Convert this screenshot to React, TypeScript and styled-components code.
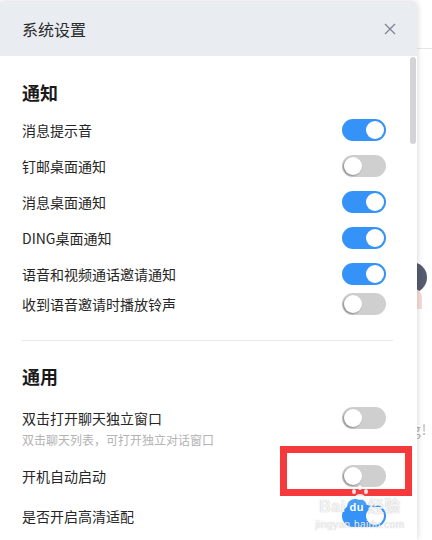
import styled, { createGlobalStyle } from "styled-components";

type Item = {
  label: string;
  on: boolean;
  h: number;
  sub?: string;
};

const notices: Item[] = [
  { label: "消息提示音", on: true, h: 36 },
  { label: "钉邮桌面通知", on: false, h: 36 },
  { label: "消息桌面通知", on: true, h: 36 },
  { label: "DING桌面通知", on: true, h: 36 },
  { label: "语音和视频通话邀请通知", on: true, h: 36 },
  { label: "收到语音邀请时播放铃声", on: false, h: 24 },
];

const general: Item[] = [
  { label: "双击打开聊天独立窗口", on: false, h: 0, sub: "双击聊天列表，可打开独立对话窗口" },
  { label: "开机自动启动", on: false, h: 40 },
  { label: "是否开启高清适配", on: true, h: 40 },
];

export default function App() {
  return (
    <Page>
      <GlobalStyle />
      <Backdrop>
        <BackHeader />
        <BackBody>
          <Avatar />
          <Shoulder />
          <BackText>ig!</BackText>
        </BackBody>
      </Backdrop>

      <Dialog>
        <Header>
          <Title>系统设置</Title>
          <CloseBtn aria-label="关闭">
            <svg width="12" height="12" viewBox="0 0 12 12">
              <path d="M1 1 11 11M11 1 1 11" stroke="#7d8593" strokeWidth="1.3" fill="none" />
            </svg>
          </CloseBtn>
        </Header>

        <Body>
          <SectionTitle>通知</SectionTitle>
          {notices.map((el, idx) => (
            <Row key={idx} $h={el.h}>
              <Label>{el.label}</Label>
              <Switch $on={el.on} />
            </Row>
          ))}

          <Divider />

          <SectionTitle $top={23}>通用</SectionTitle>
          {general.map((el, idx) =>
            el.sub ? (
              <SubRow key={idx}>
                <SubHead>
                  <Label>{el.label}</Label>
                  <Switch $on={el.on} />
                </SubHead>
                <Hint>{el.sub}</Hint>
              </SubRow>
            ) : (
              <Row key={idx} $h={el.h}>
                <Label>{el.label}</Label>
                <Switch $on={el.on} />
              </Row>
            )
          )}
        </Body>

        <ScrollThumb />
      </Dialog>

      <Highlight />

      <Watermark>
        <Paw>
          <i /><i /><i /><i />
        </Paw>
        <MarkLine>
          Bai<Du>du</Du>经验
        </MarkLine>
        <MarkUrl>jingyan.baidu.com</MarkUrl>
      </Watermark>
    </Page>
  );
}

const GlobalStyle = createGlobalStyle`
  html, body {
    margin: 0;
    padding: 0;
    background: #fff;
  }
  body {
    font-family: "Noto Sans CJK SC", "Noto Sans", sans-serif;
    -webkit-font-smoothing: antialiased;
  }
`;

const Page = styled.div`
  position: relative;
  width: 432px;
  height: 540px;
  overflow: hidden;
  background: #fff;
`;

const Backdrop = styled.div`
  display: flex;
  flex-direction: column;
  height: 100%;
`;

const BackHeader = styled.div`
  height: 48px;
  border-bottom: 1px solid #e6e6e6;
  flex-shrink: 0;
`;

const BackBody = styled.div`
  display: flex;
  flex-direction: column;
  padding: 213px 0 0 396px;
`;

const Avatar = styled.div`
  width: 31px;
  height: 31px;
  border-radius: 50%;
  background: #555c6f;
`;

const Shoulder = styled.div`
  width: 26px;
  height: 22px;
  margin-top: -6px;
  border-radius: 50% 50% 0 0;
  background: #f6dcd6;
`;

const BackText = styled.div`
  margin: 110px 0 0 12px;
  font-size: 14px;
  color: #b4b4b4;
  letter-spacing: 1px;
`;

const Dialog = styled.div`
  position: absolute;
  top: 2px;
  left: 0;
  width: 417px;
  height: 538px;
  background: #fff;
  border-radius: 0 4px 0 0;
  box-shadow: 0 0 6px rgba(0, 0, 0, 0.18);
  display: flex;
  flex-direction: column;
  overflow: hidden;
`;

const Header = styled.div`
  height: 54px;
  flex-shrink: 0;
  background: #e9ecf1;
  display: flex;
  align-items: center;
  justify-content: space-between;
  padding: 0 21px 0 22px;
`;

const Title = styled.div`
  font-size: 16px;
  color: #2b2b2b;
  line-height: 20px;
`;

const CloseBtn = styled.div`
  display: flex;
  width: 12px;
  height: 12px;
`;

const Body = styled.div`
  display: flex;
  flex-direction: column;
  padding: 24px 24px 0 22px;
`;

const SectionTitle = styled.div<{ $top?: number }>`
  font-size: 18px;
  font-weight: 700;
  line-height: 24px;
  color: #1a1a1a;
  margin: ${(p) => p.$top ?? 0}px 0 8px;
`;

const Row = styled.div<{ $h: number }>`
  height: ${(p) => p.$h}px;
  display: flex;
  align-items: center;
  justify-content: space-between;
  padding-right: 7px;
`;

const SubRow = styled.div`
  display: flex;
  flex-direction: column;
  padding: 11px 7px 7px 0;
`;

const SubHead = styled.div`
  height: 22px;
  display: flex;
  align-items: center;
  justify-content: space-between;
`;

const Label = styled.div`
  font-size: 14px;
  line-height: 20px;
  color: #262626;
`;

const Hint = styled.div`
  font-size: 12px;
  line-height: 18px;
  margin-top: 2px;
  color: #b3b3b3;
`;

const Switch = styled.div<{ $on: boolean }>`
  position: relative;
  width: 44px;
  height: 22px;
  border-radius: 11px;
  flex-shrink: 0;
  background: ${(p) => (p.$on ? "#3593f7" : "#cfcfcf")};
  &::after {
    content: "";
    position: absolute;
    top: 2px;
    left: ${(p) => (p.$on ? "24px" : "2px")};
    width: 18px;
    height: 18px;
    border-radius: 50%;
    background: #fff;
    box-shadow: ${(p) => (p.$on ? "none" : "-1px 1px 2px rgba(0,0,0,0.35)")};
  }
`;

const Divider = styled.div`
  height: 1px;
  background: #e8e8e8;
  margin-top: 24px;
  flex-shrink: 0;
`;

const ScrollThumb = styled.div`
  position: absolute;
  top: 55px;
  right: 1px;
  width: 6px;
  height: 87px;
  border-radius: 3px;
  background: #d4d4d6;
`;

const Highlight = styled.div`
  position: absolute;
  left: 280px;
  top: 446px;
  width: 132px;
  height: 50px;
  box-sizing: border-box;
  border: 7px solid #f6393b;
`;

const Watermark = styled.div`
  position: absolute;
  left: 312px;
  top: 498px;
  width: 96px;
  display: flex;
  flex-direction: column;
  align-items: center;
  color: rgba(255, 255, 255, 0.85);
  font-family: "Liberation Sans", "Noto Sans CJK SC", sans-serif;
  text-shadow: 0 0 1px rgba(140, 140, 140, 0.7);
  pointer-events: none;
`;

const Paw = styled.div`
  position: absolute;
  top: -14px;
  left: 38px;
  width: 20px;
  height: 16px;
  i {
    position: absolute;
    width: 4px;
    height: 5px;
    border-radius: 50%;
    background: rgba(255, 255, 255, 0.85);
    box-shadow: 0 0 1px rgba(140, 140, 140, 0.8);
  }
  i:nth-child(1) { left: 2px; top: 5px; }
  i:nth-child(2) { left: 8px; top: 1px; }
  i:nth-child(3) { left: 14px; top: 5px; }
  i:nth-child(4) { left: 5px; top: 10px; width: 10px; height: 6px; }
`;

const MarkLine = styled.div`
  display: flex;
  align-items: center;
  font-size: 16px;
  font-weight: 700;
  line-height: 18px;
  letter-spacing: 0.5px;
`;

const Du = styled.span`
  display: inline-flex;
  align-items: center;
  justify-content: center;
  width: 20px;
  height: 16px;
  margin: 0 1px;
  border-radius: 8px;
  background: rgba(53, 147, 247, 0.9);
  font-size: 11px;
  color: #fff;
  text-shadow: none;
`;

const MarkUrl = styled.div`
  font-size: 10px;
  line-height: 12px;
  margin-top: 3px;
  letter-spacing: 0.5px;
`;
